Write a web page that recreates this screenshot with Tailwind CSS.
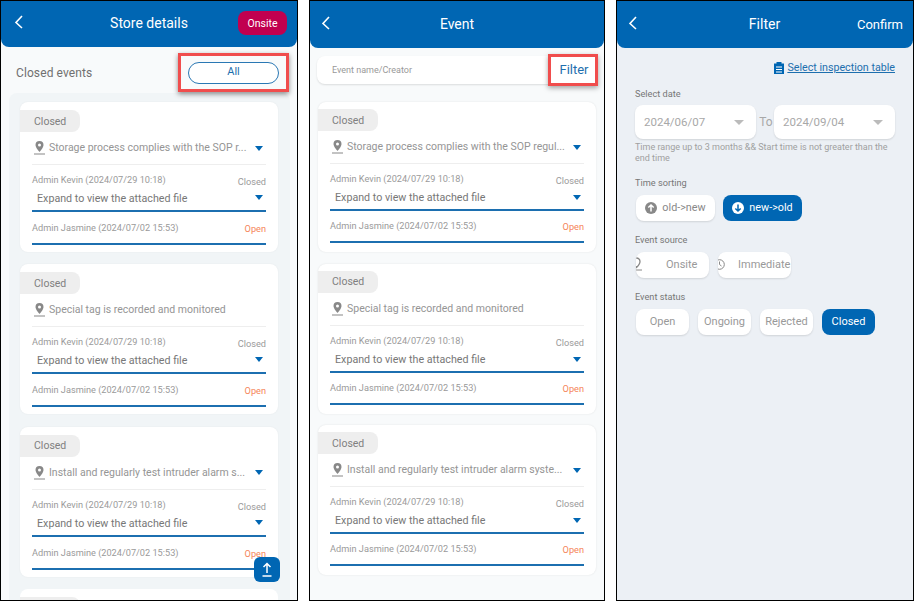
<!DOCTYPE html>
<html><head><meta charset="utf-8"><script src="https://cdn.jsdelivr.net/npm/@tailwindcss/browser@4"></script></head>
<body class="bg-white">
<div class="w-[914px] h-[601px] overflow-hidden flex font-['Roboto',sans-serif] bg-white">

<!-- PANEL 1 -->
<section class="relative w-[298px] h-[601px] border border-black overflow-hidden bg-[#f8fafb] shrink-0">
  <header class="relative h-[46px] bg-[#0066b3] rounded-b-lg flex items-center justify-center">
    <svg class="absolute left-[13px] top-[13px]" width="10" height="15" viewBox="0 0 10 15" fill="none" stroke="white" stroke-width="1.6"><path d="M8 2 2 8.5 8 14"/></svg>
    <span class="text-white text-[14px] -mt-[1px]">Store details</span>
    <span class="absolute left-[237px] top-[10px] w-[49px] h-[24px] pt-[2px] rounded-lg bg-[#c1004f] text-white text-[10.5px] flex items-center justify-center">Onsite</span>
  </header>
  <div class="relative h-[46px] pl-[15px] flex items-center">
    <span class="text-[12px] text-[#707070] tracking-[0.1px] mt-[6px]">Closed events</span>
    <div class="absolute left-[177px] top-[6px] w-[111px] h-[39px] border-[3px] border-[#f04d4d] shadow-[0_2px_5px_rgba(0,0,0,0.45)] bg-[#f8fafb] flex items-center justify-center">
      <span class="w-[91px] h-[22px] rounded-[11px] border border-[#2a78b4] bg-white text-[#1d6fae] text-[11px] flex items-center justify-center">All</span>
    </div>
  </div>
  <div class="ml-[8px] w-[281px] h-[520px] bg-[#f1f5f7] rounded-t-lg pt-[9px] pl-[11px] flex flex-col gap-[12.3px]">
    <article class="w-[258px] h-[150px] shrink-0 bg-white rounded-lg pt-[8px] shadow-[0_0_2px_rgba(0,0,0,0.06)]">
      <span class="w-[60px] h-[22px] pt-[1px] rounded-r-lg bg-[#eeeeee] text-[#808080] text-[10.5px] flex items-center pl-[14px]">Closed</span>
      <div class="mx-[12px] h-[33px] flex items-center border-b border-[#eeeeee] text-[#959595] text-[10.5px]">
        <svg class="ml-[2px] mr-[4px] shrink-0" width="11" height="14" viewBox="0 0 11 14"><path fill="#888" d="M5.5 0a4 4 0 0 0-4 4c0 2.800 4 7 4 7s4-4.200 4-7a4 4 0 0 0-4-4zm0 5.500a1.500 1.500 0 1 1 0-3 1.500 1.500 0 0 1 0 3z"/><rect y="12.500" width="11" height="1" fill="#888"/></svg>
        <span class="whitespace-nowrap">Storage process complies with the SOP r...</span>
        <svg class="ml-auto mr-[3px]" width="8" height="5" viewBox="0 0 8 5"><path fill="#0066b3" d="M0 0h8L4 5z"/></svg>
      </div>
      <div class="mx-[12px] h-[47px] border-b-2 border-[#1c6fb0] relative text-[#9a9a9a]">
        <span class="absolute left-0 top-[8px] text-[9.2px] whitespace-nowrap">Admin Kevin (2024/07/29 10:18)</span>
        <span class="absolute right-0 top-[10px] text-[9.2px]">Closed</span>
        <span class="absolute left-[5px] top-[26px] text-[10.7px] text-[#777] whitespace-nowrap">Expand to view the attached file</span>
        <svg class="absolute right-[3px] top-[30px]" width="8" height="5" viewBox="0 0 8 5"><path fill="#0066b3" d="M0 0h8L4 5z"/></svg>
      </div>
      <div class="mx-[12px] h-[33px] border-b-2 border-[#1c6fb0] relative text-[#9a9a9a]">
        <span class="absolute left-0 top-[9px] text-[9.2px] whitespace-nowrap">Admin Jasmine (2024/07/02 15:53)</span>
        <span class="absolute right-0 top-[10px] text-[9.2px] text-[#f58559]">Open</span>
      </div>
    </article>
    <article class="w-[258px] h-[150px] shrink-0 bg-white rounded-lg pt-[8px] shadow-[0_0_2px_rgba(0,0,0,0.06)]">
      <span class="w-[60px] h-[22px] pt-[1px] rounded-r-lg bg-[#eeeeee] text-[#808080] text-[10.5px] flex items-center pl-[14px]">Closed</span>
      <div class="mx-[12px] h-[33px] flex items-center border-b border-[#eeeeee] text-[#959595] text-[10.5px]">
        <svg class="ml-[2px] mr-[4px] shrink-0" width="11" height="14" viewBox="0 0 11 14"><path fill="#888" d="M5.5 0a4 4 0 0 0-4 4c0 2.800 4 7 4 7s4-4.200 4-7a4 4 0 0 0-4-4zm0 5.500a1.500 1.500 0 1 1 0-3 1.500 1.500 0 0 1 0 3z"/><rect y="12.500" width="11" height="1" fill="#888"/></svg>
        <span class="whitespace-nowrap">Special tag is recorded and monitored</span>
      </div>
      <div class="mx-[12px] h-[47px] border-b-2 border-[#1c6fb0] relative text-[#9a9a9a]">
        <span class="absolute left-0 top-[8px] text-[9.2px] whitespace-nowrap">Admin Kevin (2024/07/29 10:18)</span>
        <span class="absolute right-0 top-[10px] text-[9.2px]">Closed</span>
        <span class="absolute left-[5px] top-[26px] text-[10.7px] text-[#777] whitespace-nowrap">Expand to view the attached file</span>
        <svg class="absolute right-[3px] top-[30px]" width="8" height="5" viewBox="0 0 8 5"><path fill="#0066b3" d="M0 0h8L4 5z"/></svg>
      </div>
      <div class="mx-[12px] h-[33px] border-b-2 border-[#1c6fb0] relative text-[#9a9a9a]">
        <span class="absolute left-0 top-[9px] text-[9.2px] whitespace-nowrap">Admin Jasmine (2024/07/02 15:53)</span>
        <span class="absolute right-0 top-[10px] text-[9.2px] text-[#f58559]">Open</span>
      </div>
    </article>
    <article class="w-[258px] h-[150px] shrink-0 bg-white rounded-lg pt-[8px] shadow-[0_0_2px_rgba(0,0,0,0.06)]">
      <span class="w-[60px] h-[22px] pt-[1px] rounded-r-lg bg-[#eeeeee] text-[#808080] text-[10.5px] flex items-center pl-[14px]">Closed</span>
      <div class="mx-[12px] h-[33px] flex items-center border-b border-[#eeeeee] text-[#959595] text-[10.5px]">
        <svg class="ml-[2px] mr-[4px] shrink-0" width="11" height="14" viewBox="0 0 11 14"><path fill="#888" d="M5.5 0a4 4 0 0 0-4 4c0 2.800 4 7 4 7s4-4.200 4-7a4 4 0 0 0-4-4zm0 5.500a1.500 1.500 0 1 1 0-3 1.500 1.500 0 0 1 0 3z"/><rect y="12.500" width="11" height="1" fill="#888"/></svg>
        <span class="whitespace-nowrap">Install and regularly test intruder alarm s...</span>
        <svg class="ml-auto mr-[3px]" width="8" height="5" viewBox="0 0 8 5"><path fill="#0066b3" d="M0 0h8L4 5z"/></svg>
      </div>
      <div class="mx-[12px] h-[47px] border-b-2 border-[#1c6fb0] relative text-[#9a9a9a]">
        <span class="absolute left-0 top-[8px] text-[9.2px] whitespace-nowrap">Admin Kevin (2024/07/29 10:18)</span>
        <span class="absolute right-0 top-[10px] text-[9.2px]">Closed</span>
        <span class="absolute left-[5px] top-[26px] text-[10.7px] text-[#777] whitespace-nowrap">Expand to view the attached file</span>
        <svg class="absolute right-[3px] top-[30px]" width="8" height="5" viewBox="0 0 8 5"><path fill="#0066b3" d="M0 0h8L4 5z"/></svg>
      </div>
      <div class="mx-[12px] h-[33px] border-b-2 border-[#1c6fb0] relative text-[#9a9a9a]">
        <span class="absolute left-0 top-[9px] text-[9.2px] whitespace-nowrap">Admin Jasmine (2024/07/02 15:53)</span>
        <span class="absolute right-0 top-[10px] text-[9.2px] text-[#f58559]">Open</span>
      </div>
    </article>
    <article class="w-[258px] h-[150px] shrink-0 bg-white rounded-lg pt-[8px]">
      <span class="block w-[60px] h-[22px] rounded-r-lg bg-[#eeeeee]"></span>
    </article>
  </div>
  <button class="absolute left-[253px] top-[556px] w-[26px] h-[25px] rounded-md bg-[#0066b3] flex items-center justify-center">
    <svg width="12" height="15" viewBox="0 0 12 15" fill="none" stroke="white" stroke-width="1.500"><path d="M6 11V2M2.500 5 6 1.500 9.500 5"/><path d="M1.500 14h9"/></svg>
  </button>
</section>

<div class="w-[11px] shrink-0"></div>

<!-- PANEL 2 -->
<section class="relative w-[296px] h-[601px] border border-black overflow-hidden bg-[#f8fafb] shrink-0">
  <header class="relative h-[47px] bg-[#0066b3] rounded-b-lg flex items-center justify-center">
    <svg class="absolute left-[11px] top-[14px]" width="10" height="15" viewBox="0 0 10 15" fill="none" stroke="white" stroke-width="1.600"><path d="M8 2 2 8.500 8 14"/></svg>
    <span class="text-white text-[14px]">Event</span>
  </header>
  <div class="relative mx-[7px] mt-[8px] h-[28px] w-[280px] bg-white rounded-lg shadow-[0_1px_2px_rgba(0,0,0,0.12)] pl-[15px] flex items-center">
    <span class="text-[9px] text-[#999] mt-[1px]">Event name/Creator</span>
    <div class="absolute left-[231px] -top-[2px] w-[50px] h-[32px] border-[3px] border-[#f04d4d] shadow-[0_2px_5px_rgba(0,0,0,0.35)] bg-white flex items-center justify-center">
      <span class="text-[#1d6fae] text-[13px] ml-[2px]">Filter</span>
    </div>
  </div>
  <div class="ml-[8px] mt-[18px] flex flex-col gap-[11.5px]">
    <article class="w-[278px] h-[150px] shrink-0 bg-white rounded-lg pt-[7px] shadow-[0_0_2px_rgba(0,0,0,0.1)]">
      <span class="w-[60px] h-[22px] pt-[1px] rounded-r-lg bg-[#eeeeee] text-[#808080] text-[10.5px] flex items-center pl-[14px]">Closed</span>
      <div class="mx-[12px] h-[33px] flex items-center border-b border-[#eeeeee] text-[#959595] text-[10.5px]">
        <svg class="ml-[2px] mr-[4px] shrink-0" width="11" height="14" viewBox="0 0 11 14"><path fill="#888" d="M5.5 0a4 4 0 0 0-4 4c0 2.800 4 7 4 7s4-4.200 4-7a4 4 0 0 0-4-4zm0 5.500a1.500 1.500 0 1 1 0-3 1.500 1.500 0 0 1 0 3z"/><rect y="12.500" width="11" height="1" fill="#888"/></svg>
        <span class="whitespace-nowrap">Storage process complies with the SOP regul...</span>
        <svg class="ml-auto mr-[3px]" width="8" height="5" viewBox="0 0 8 5"><path fill="#0066b3" d="M0 0h8L4 5z"/></svg>
      </div>
      <div class="mx-[12px] h-[47px] border-b-2 border-[#1c6fb0] relative text-[#9a9a9a]">
        <span class="absolute left-0 top-[8px] text-[9.2px] whitespace-nowrap">Admin Kevin (2024/07/29 10:18)</span>
        <span class="absolute right-0 top-[10px] text-[9.2px]">Closed</span>
        <span class="absolute left-[5px] top-[26px] text-[10.7px] text-[#777] whitespace-nowrap">Expand to view the attached file</span>
        <svg class="absolute right-[3px] top-[31px]" width="8" height="5" viewBox="0 0 8 5"><path fill="#0066b3" d="M0 0h8L4 5z"/></svg>
      </div>
      <div class="mx-[12px] h-[32px] border-b-2 border-[#1c6fb0] relative text-[#9a9a9a]">
        <span class="absolute left-0 top-[8px] text-[9.2px] whitespace-nowrap">Admin Jasmine (2024/07/02 15:53)</span>
        <span class="absolute right-0 top-[9px] text-[9.2px] text-[#f58559]">Open</span>
      </div>
    </article>
    <article class="w-[278px] h-[150px] shrink-0 bg-white rounded-lg pt-[7px] shadow-[0_0_2px_rgba(0,0,0,0.1)]">
      <span class="w-[60px] h-[22px] pt-[1px] rounded-r-lg bg-[#eeeeee] text-[#808080] text-[10.5px] flex items-center pl-[14px]">Closed</span>
      <div class="mx-[12px] h-[33px] flex items-center border-b border-[#eeeeee] text-[#959595] text-[10.5px]">
        <svg class="ml-[2px] mr-[4px] shrink-0" width="11" height="14" viewBox="0 0 11 14"><path fill="#888" d="M5.5 0a4 4 0 0 0-4 4c0 2.800 4 7 4 7s4-4.200 4-7a4 4 0 0 0-4-4zm0 5.500a1.500 1.500 0 1 1 0-3 1.500 1.500 0 0 1 0 3z"/><rect y="12.500" width="11" height="1" fill="#888"/></svg>
        <span class="whitespace-nowrap">Special tag is recorded and monitored</span>
      </div>
      <div class="mx-[12px] h-[47px] border-b-2 border-[#1c6fb0] relative text-[#9a9a9a]">
        <span class="absolute left-0 top-[8px] text-[9.2px] whitespace-nowrap">Admin Kevin (2024/07/29 10:18)</span>
        <span class="absolute right-0 top-[10px] text-[9.2px]">Closed</span>
        <span class="absolute left-[5px] top-[26px] text-[10.7px] text-[#777] whitespace-nowrap">Expand to view the attached file</span>
        <svg class="absolute right-[3px] top-[31px]" width="8" height="5" viewBox="0 0 8 5"><path fill="#0066b3" d="M0 0h8L4 5z"/></svg>
      </div>
      <div class="mx-[12px] h-[32px] border-b-2 border-[#1c6fb0] relative text-[#9a9a9a]">
        <span class="absolute left-0 top-[8px] text-[9.2px] whitespace-nowrap">Admin Jasmine (2024/07/02 15:53)</span>
        <span class="absolute right-0 top-[9px] text-[9.2px] text-[#f58559]">Open</span>
      </div>
    </article>
    <article class="w-[278px] h-[150px] shrink-0 bg-white rounded-lg pt-[7px] shadow-[0_0_2px_rgba(0,0,0,0.1)]">
      <span class="w-[60px] h-[22px] pt-[1px] rounded-r-lg bg-[#eeeeee] text-[#808080] text-[10.5px] flex items-center pl-[14px]">Closed</span>
      <div class="mx-[12px] h-[33px] flex items-center border-b border-[#eeeeee] text-[#959595] text-[10.5px]">
        <svg class="ml-[2px] mr-[4px] shrink-0" width="11" height="14" viewBox="0 0 11 14"><path fill="#888" d="M5.5 0a4 4 0 0 0-4 4c0 2.800 4 7 4 7s4-4.200 4-7a4 4 0 0 0-4-4zm0 5.500a1.500 1.500 0 1 1 0-3 1.500 1.500 0 0 1 0 3z"/><rect y="12.500" width="11" height="1" fill="#888"/></svg>
        <span class="whitespace-nowrap">Install and regularly test intruder alarm syste...</span>
        <svg class="ml-auto mr-[3px]" width="8" height="5" viewBox="0 0 8 5"><path fill="#0066b3" d="M0 0h8L4 5z"/></svg>
      </div>
      <div class="mx-[12px] h-[47px] border-b-2 border-[#1c6fb0] relative text-[#9a9a9a]">
        <span class="absolute left-0 top-[8px] text-[9.2px] whitespace-nowrap">Admin Kevin (2024/07/29 10:18)</span>
        <span class="absolute right-0 top-[10px] text-[9.2px]">Closed</span>
        <span class="absolute left-[5px] top-[26px] text-[10.7px] text-[#777] whitespace-nowrap">Expand to view the attached file</span>
        <svg class="absolute right-[3px] top-[31px]" width="8" height="5" viewBox="0 0 8 5"><path fill="#0066b3" d="M0 0h8L4 5z"/></svg>
      </div>
      <div class="mx-[12px] h-[32px] border-b-2 border-[#1c6fb0] relative text-[#9a9a9a]">
        <span class="absolute left-0 top-[8px] text-[9.2px] whitespace-nowrap">Admin Jasmine (2024/07/02 15:53)</span>
        <span class="absolute right-0 top-[9px] text-[9.2px] text-[#f58559]">Open</span>
      </div>
    </article>
  </div>
</section>

<div class="w-[11px] shrink-0"></div>

<!-- PANEL 3 -->
<section class="w-[298px] h-[601px] border border-black overflow-hidden bg-[#ecf0f5] shrink-0">
  <header class="relative h-[47px] bg-[#0066b3] rounded-b-lg flex items-center justify-center">
    <svg class="absolute left-[11px] top-[14px]" width="10" height="15" viewBox="0 0 10 15" fill="none" stroke="white" stroke-width="1.600"><path d="M8 2 2 8.500 8 14"/></svg>
    <span class="text-white text-[14px] -ml-[1px]">Filter</span>
    <span class="absolute right-[10px] top-[14px] text-white text-[13px]">Confirm</span>
  </header>
  <div class="pl-[18px] pr-[18px]">
    <div class="mt-[13px] h-[14px] flex items-center justify-end gap-[3px] text-[10.7px] text-[#1d6fae]">
      <svg width="10" height="12" viewBox="0 0 10 12"><path fill="#0066b3" d="M0 1.500h2.500V0h5v1.500H10V12H0z"/><path stroke="white" stroke-width="1" d="M2 5h6M2 7.500h6M2 10h6"/></svg>
      <span class="underline">Select inspection table</span>
    </div>
    <p class="mt-[12px] pt-[1px] h-[12px] text-[9.200px] leading-[12px] text-[#777]">Select date</p>
    <div class="mt-[6px] flex items-center">
      <div class="w-[121px] h-[34px] pt-[1px] bg-white rounded-lg shadow-[0_1px_2px_rgba(0,0,0,0.12)] pl-[9px] pr-[12px] flex items-center justify-between text-[11.5px] text-[#a8a8a8]">2024/06/07<svg width="10" height="5" viewBox="0 0 10 5"><path fill="#bbb" d="M0 0h10L5 5z"/></svg></div>
      <span class="w-[18px] text-center text-[12px] text-[#a8a8a8] pl-[2px]">To</span>
      <div class="w-[121px] h-[34px] pt-[1px] bg-white rounded-lg shadow-[0_1px_2px_rgba(0,0,0,0.12)] pl-[9px] pr-[12px] flex items-center justify-between text-[11.5px] text-[#a8a8a8]">2024/09/04<svg width="10" height="5" viewBox="0 0 10 5"><path fill="#bbb" d="M0 0h10L5 5z"/></svg></div>
    </div>
    <p class="mt-[3px] w-[262px] text-[9px] leading-[11px] text-[#a0a0a0]">Time range up to 3 months &amp;&amp; Start time is not greater than the end time</p>
    <p class="mt-[12.5px] text-[9.200px] leading-[12px] text-[#777]">Time sorting</p>
    <div class="mt-[6px] ml-[1px] flex gap-[8px]">
      <div class="w-[79px] h-[26px] pt-[1px] bg-white rounded-lg shadow-[0_1px_2px_rgba(0,0,0,0.12)] flex items-center justify-center gap-[5px] text-[10.8px] text-[#888]">
        <svg width="12" height="12" viewBox="0 0 12 12"><circle cx="6" cy="6" r="6" fill="#888"/><path stroke="white" stroke-width="1.500" fill="none" d="M6 9.500V3M3.300 5.500 6 3l2.700 2.500"/></svg>old-&gt;new</div>
      <div class="w-[79px] h-[26px] pt-[1px] bg-[#0066b3] rounded-lg flex items-center justify-center gap-[5px] text-[10.8px] text-white">
        <svg width="12" height="12" viewBox="0 0 12 12"><circle cx="6" cy="6" r="6" fill="white"/><path stroke="#0066b3" stroke-width="1.500" fill="none" d="M6 2.500V9M3.300 6.500 6 9l2.700-2.500"/></svg>new-&gt;old</div>
    </div>
    <p class="mt-[13px] text-[9.200px] leading-[12px] text-[#777]">Event source</p>
    <div class="mt-[6px] ml-[1px] flex gap-[9px]">
      <div class="w-[73px] h-[26px] pt-[1px] bg-white rounded-lg shadow-[0_1px_2px_rgba(0,0,0,0.12)] overflow-hidden flex items-center text-[11px] text-[#999] relative pl-[30px]">
        <svg class="absolute -left-[5px] top-[5px]" width="11" height="14" viewBox="0 0 11 14"><path fill="none" stroke="#888" stroke-width="1.300" d="M5.500 1a3.500 3.500 0 0 0-3.500 3.500C2 7 5.500 10.500 5.500 10.500S9 7 9 4.500A3.500 3.500 0 0 0 5.500 1z"/><path stroke="#888" d="M0 13h11"/></svg>Onsite</div>
      <div class="w-[73px] h-[26px] pt-[1px] bg-white rounded-lg shadow-[0_1px_2px_rgba(0,0,0,0.12)] overflow-hidden flex items-center text-[11px] text-[#999] relative pl-[20px] whitespace-nowrap">
        <svg class="absolute -left-[4px] top-[7px]" width="11" height="11" viewBox="0 0 11 11" fill="none" stroke="#888" stroke-width="1"><circle cx="5.500" cy="5.500" r="4.800"/><path d="M5.500 2.500v3l2 1.500"/></svg>Immediate</div>
    </div>
    <p class="mt-[13px] text-[9.200px] leading-[12px] text-[#777]">Event status</p>
    <div class="mt-[6px] ml-[1px] flex gap-[9px] text-[11px]">
      <div class="w-[53px] h-[26px] pt-[1px] bg-white rounded-lg shadow-[0_1px_2px_rgba(0,0,0,0.12)] flex items-center justify-center text-[#999]">Open</div>
      <div class="w-[53px] h-[26px] pt-[1px] bg-white rounded-lg shadow-[0_1px_2px_rgba(0,0,0,0.12)] flex items-center justify-center text-[#999]">Ongoing</div>
      <div class="w-[53px] h-[26px] pt-[1px] bg-white rounded-lg shadow-[0_1px_2px_rgba(0,0,0,0.12)] flex items-center justify-center text-[#999]">Rejected</div>
      <div class="w-[53px] h-[26px] pt-[1px] bg-[#0066b3] rounded-lg flex items-center justify-center text-white">Closed</div>
    </div>
  </div>
</section>
</div>
</body></html>
